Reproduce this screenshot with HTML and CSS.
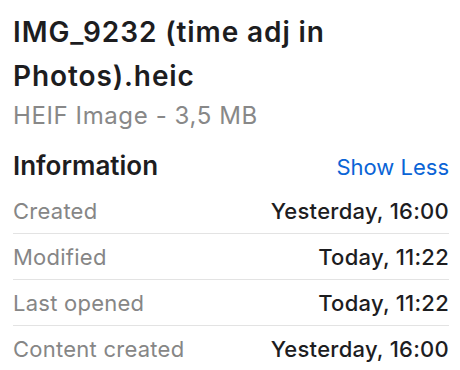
FILE: index.html
```html
<!DOCTYPE html>
<html lang="en">
<head>
  <meta charset="UTF-8" />
  <title>IMG_9232 info</title>
  <link rel="stylesheet" href="styles.css">
</head>
<body>
  <div class="panel">
    <h1 class="title">IMG_9232 (time adj in Photos).heic</h1>
    <p class="kind">HEIF Image - 3,5 MB</p>

    <div class="section-head">
      <h2>Information</h2>
      <a href="#" class="toggle">Show Less</a>
    </div>

    <ul class="info">
      <li><span class="label">Created</span><span class="value">Yesterday, 16:00</span></li>
      <li><span class="label">Modified</span><span class="value">Today, 11:22</span></li>
      <li><span class="label">Last opened</span><span class="value">Today, 11:22</span></li>
      <li><span class="label">Content created</span><span class="value">Yesterday, 16:00</span></li>
    </ul>
  </div>
</body>
</html>
```

FILE: styles.css
```css
body {
  margin: 0;
  background: #fff;
  font-family: Inter, "Noto Sans", sans-serif;
  color: #1d1d1f;
}
.panel {
  padding: 10px 11px 0 13px;
}
.title {
  margin: 0;
  font-size: 28px;
  font-weight: 600;
  line-height: 44px;
  letter-spacing: 0.9px;
}
.kind {
  margin: 3px 0 0;
  font-size: 24px;
  line-height: 30px;
  letter-spacing: 0.6px;
  color: #888;
}
.section-head {
  display: flex;
  justify-content: space-between;
  align-items: baseline;
  margin-top: 19px;
}
.section-head h2 {
  margin: 0;
  font-size: 26px;
  font-weight: 600;
  line-height: 32px;
}
.toggle {
  color: #0a64d6;
  text-decoration: none;
  font-size: 22px;
}
.info {
  list-style: none;
  margin: 6px 0 0;
  padding: 0;
}
.info li {
  display: flex;
  justify-content: space-between;
  align-items: center;
  height: 45px;
  border-bottom: 1px solid #e3e3e3;
  font-size: 22px;
  letter-spacing: 0.25px;
}
.info li:last-child {
  border-bottom: none;
}
.label {
  color: #868686;
}
.value {
  font-weight: 500;
}
```
